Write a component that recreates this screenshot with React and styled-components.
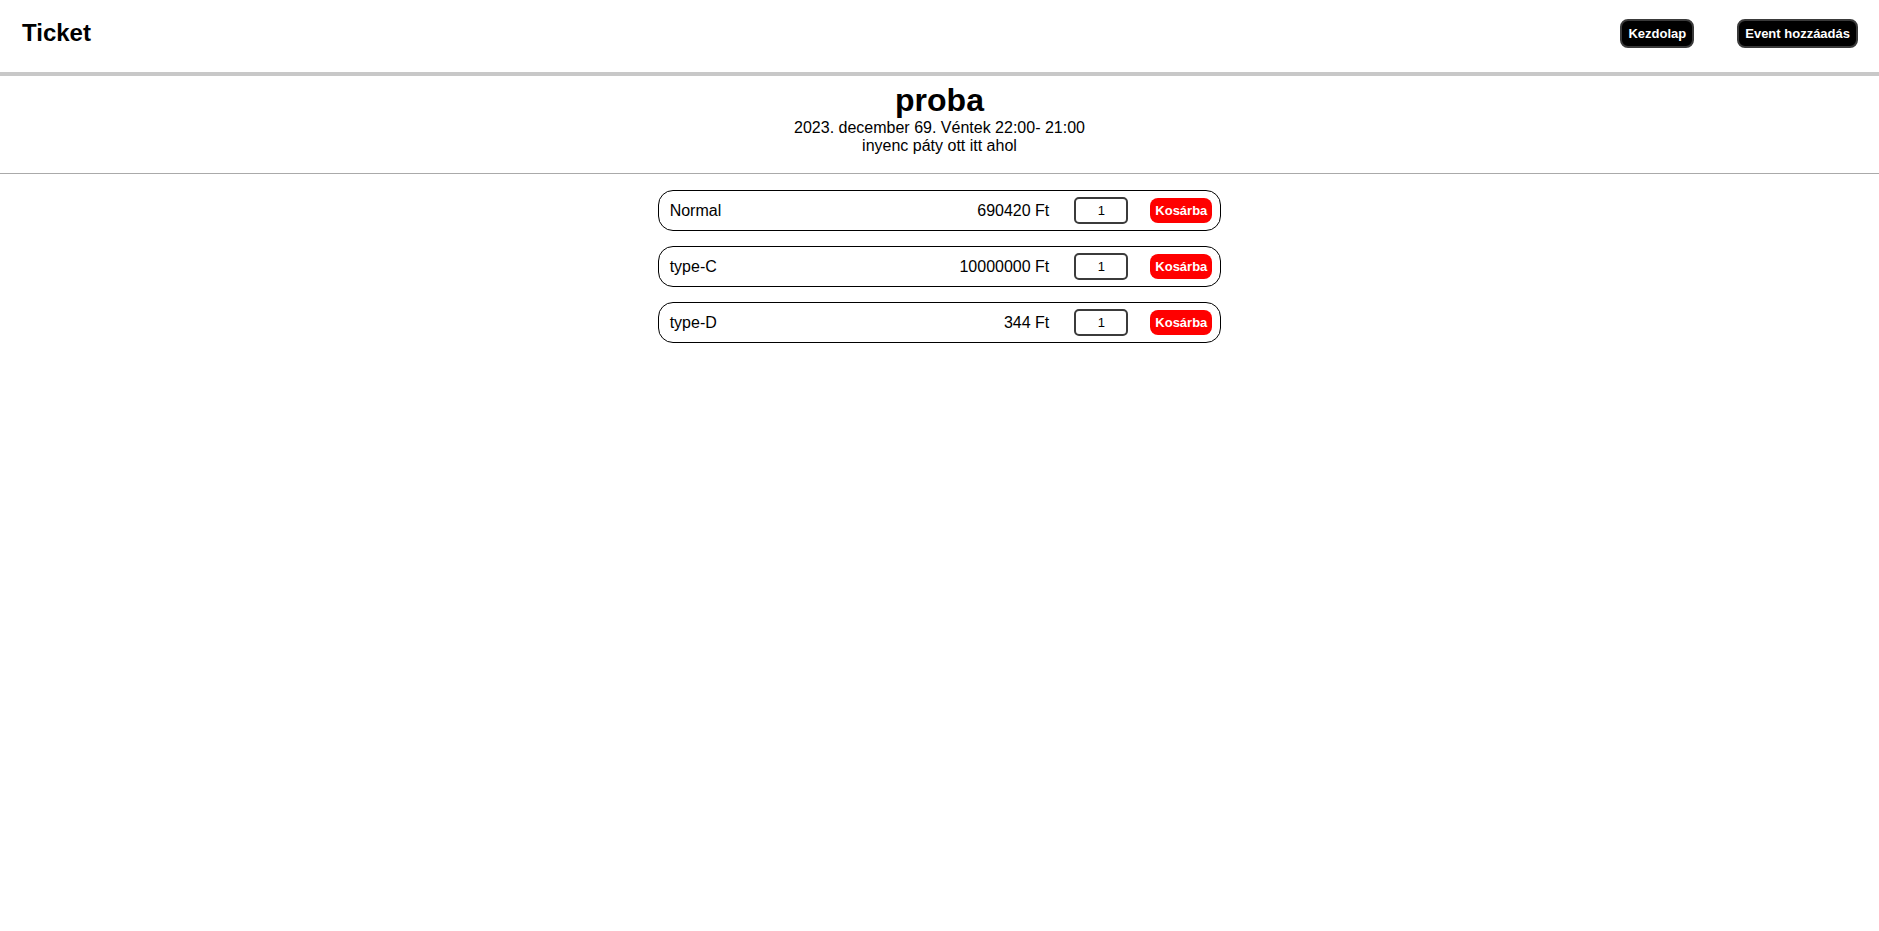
import React from "react";
import styled, { createGlobalStyle } from "styled-components";

const tickets = [
  { name: "Normal", price: 690420 },
  { name: "type-C", price: 10000000 },
  { name: "type-D", price: 344 },
];

const GlobalStyle = createGlobalStyle`
  body {
    margin: 0;
    background: #fff;
    font-family: "Liberation Sans", Arial, sans-serif;
    color: #000;
  }
`;

const Header = styled.header`
  display: flex;
  align-items: center;
  justify-content: space-between;
  box-sizing: border-box;
  height: 76px;
  padding: 0 21px 6px 22px;
  border-bottom: 4px solid #c8c8c8;
`;

const Brand = styled.h2`
  margin: 0;
  font-size: 24px;
  font-weight: bold;
`;

const Nav = styled.nav`
  display: flex;
  gap: 43px;
`;

const NavButton = styled.button`
  height: 29px;
  padding: 0 6px;
  background: #000;
  color: #fff;
  border: 2px solid #3a3a3a;
  border-radius: 8px;
  font-family: "Liberation Sans", Arial, sans-serif;
  font-size: 13px;
  font-weight: bold;
  cursor: pointer;
`;

const EventInfo = styled.section`
  text-align: center;
  padding: 6px 0 18px;
  border-bottom: 1px solid #aaa;
`;

const Title = styled.h1`
  margin: 0;
  font-size: 32px;
  line-height: 37px;
`;

const InfoLine = styled.div`
  font-size: 16px;
  line-height: 18px;
`;

const List = styled.div`
  display: flex;
  flex-direction: column;
  align-items: center;
  gap: 15px;
  padding-top: 16px;
`;

const Card = styled.div`
  display: flex;
  align-items: center;
  box-sizing: border-box;
  width: 30%;
  height: 41px;
  padding: 0 8px 0 11px;
  border: 1px solid #000;
  border-radius: 15px;
  font-size: 16px;
`;

const Name = styled.span`
  flex: 1;
`;

const Price = styled.span`
  margin-right: 25px;
`;

const Qty = styled.input`
  box-sizing: border-box;
  width: 54px;
  height: 27px;
  margin-right: 22px;
  border: 2px solid #3b3b3b;
  border-radius: 5px;
  text-align: center;
  font-family: "Liberation Sans", Arial, sans-serif;
  font-size: 13px;
  padding: 0;
`;

const CartButton = styled.button`
  height: 25px;
  padding: 0 5px;
  background: #ff0000;
  color: #fff;
  border: none;
  border-radius: 8px;
  font-family: "Liberation Sans", Arial, sans-serif;
  font-size: 13px;
  font-weight: bold;
  cursor: pointer;
`;

export default function App() {
  return (
    <>
      <GlobalStyle />
      <Header>
        <Brand>Ticket</Brand>
        <Nav>
          <NavButton>Kezdolap</NavButton>
          <NavButton>Event hozzáadás</NavButton>
        </Nav>
      </Header>
      <EventInfo>
        <Title>proba</Title>
        <InfoLine>2023. december 69. Véntek 22:00- 21:00</InfoLine>
        <InfoLine>inyenc páty ott itt ahol</InfoLine>
      </EventInfo>
      <List>
        {tickets.map((t) => (
          <Card key={t.name}>
            <Name>{t.name}</Name>
            <Price>{t.price} Ft</Price>
            <Qty type="text" defaultValue="1" />
            <CartButton>Kosárba</CartButton>
          </Card>
        ))}
      </List>
    </>
  );
}
